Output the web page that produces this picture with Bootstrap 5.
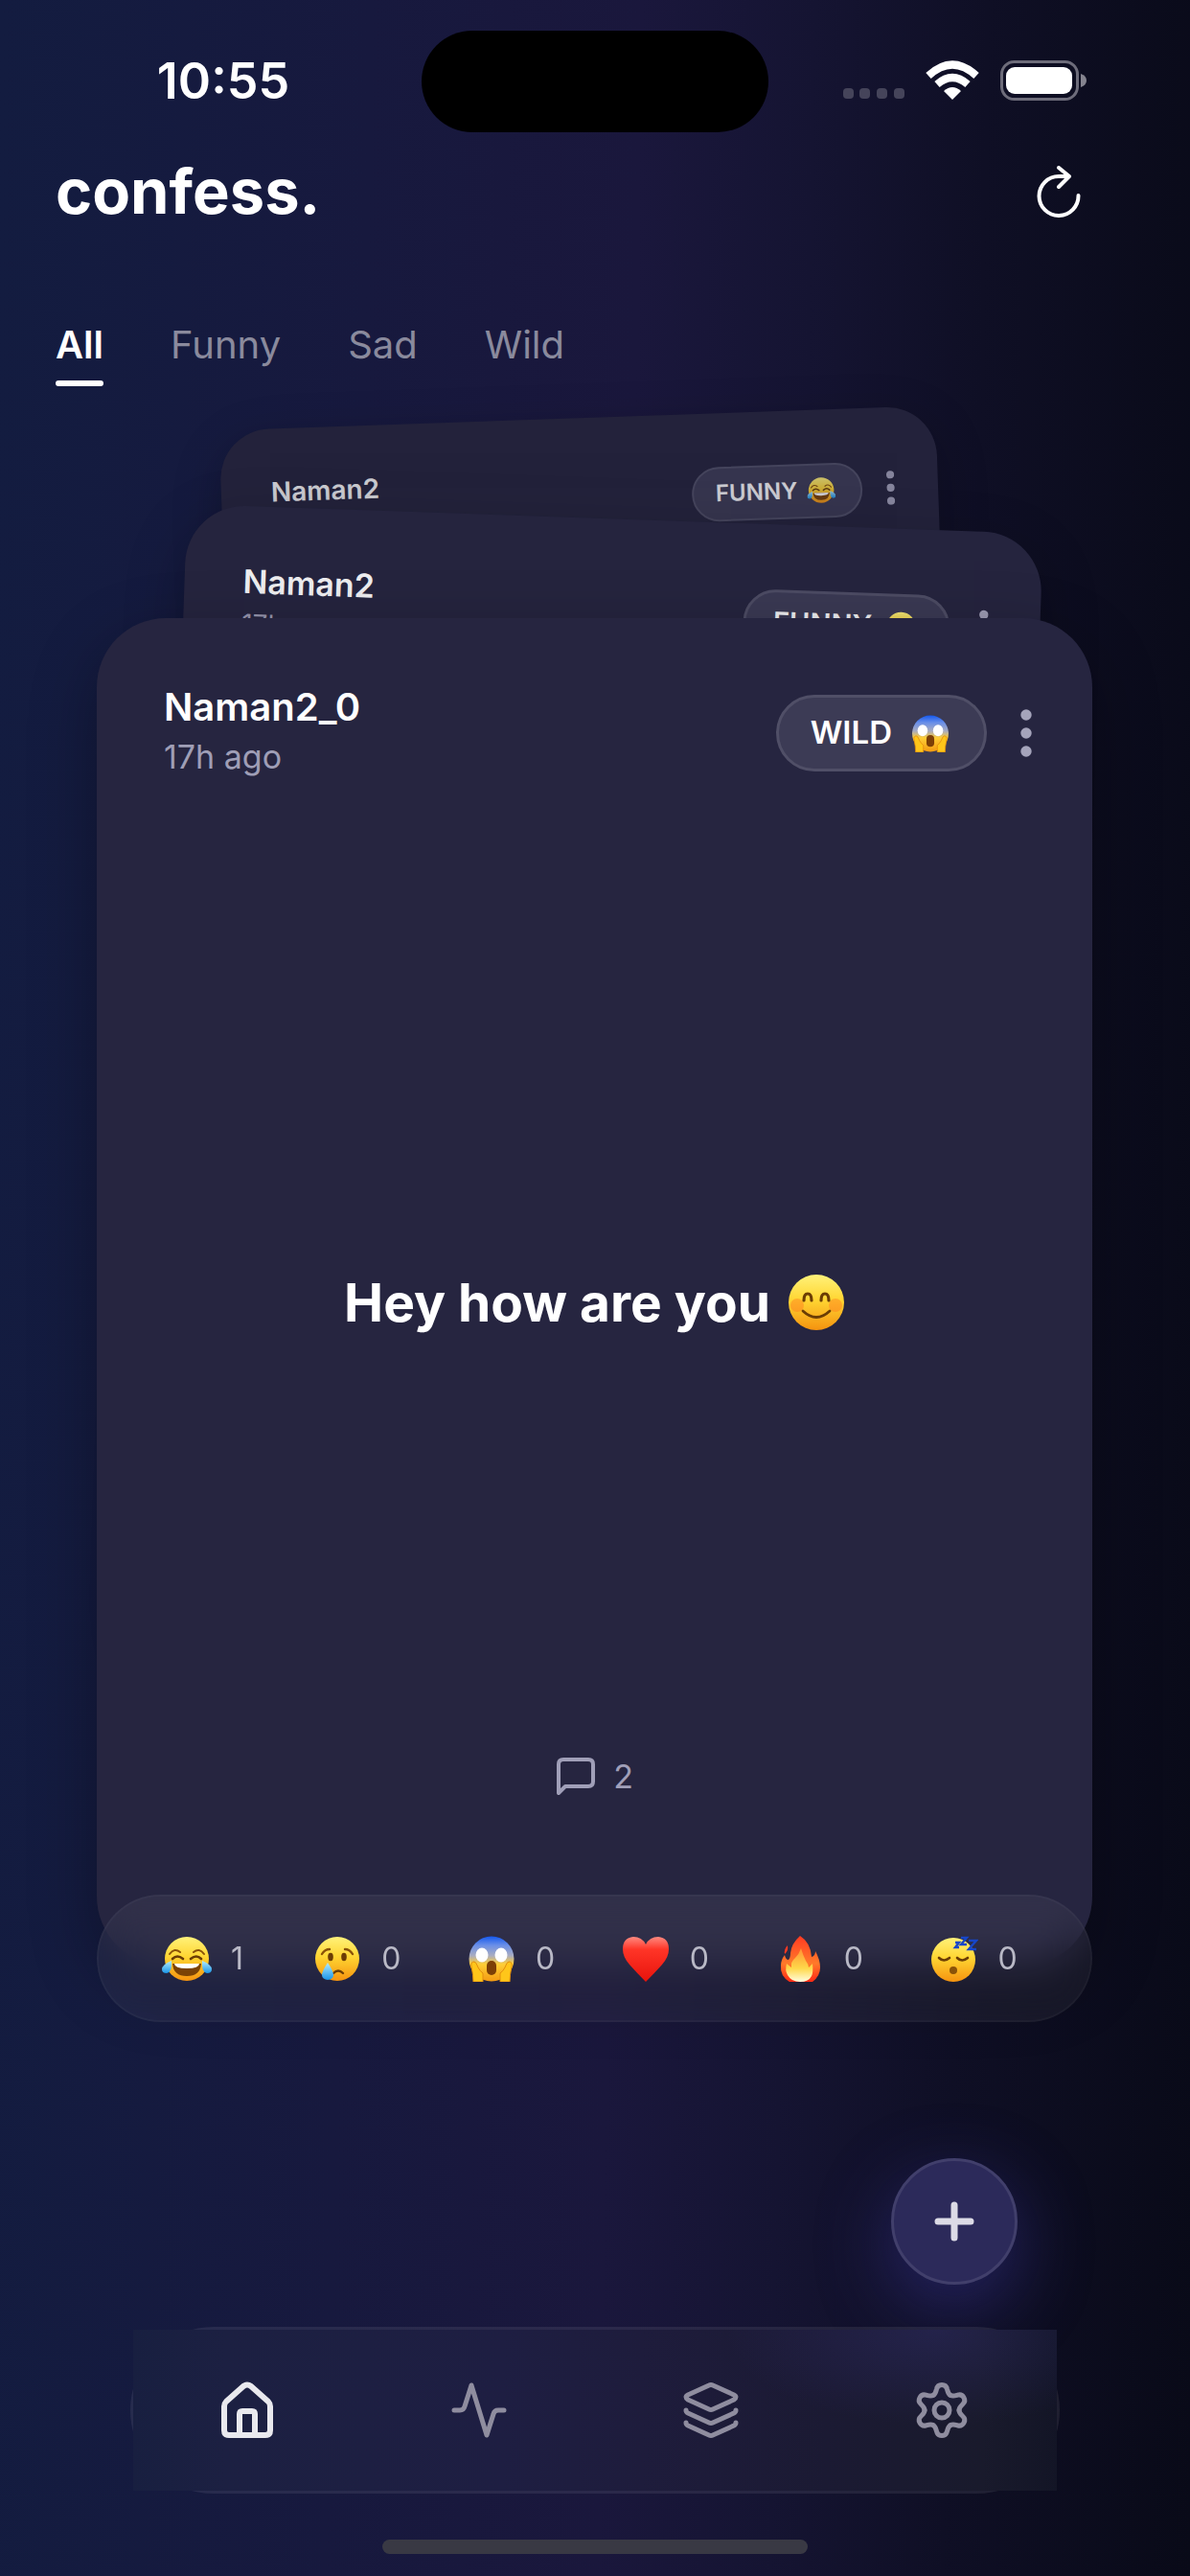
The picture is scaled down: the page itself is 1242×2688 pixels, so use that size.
<!DOCTYPE html>
<html lang="en">

<head>
    <meta charset="UTF-8">
    <meta name="viewport" content="width=device-width, initial-scale=1.0">
    <title>confess.</title>
    <link href="https://cdn.jsdelivr.net/npm/bootstrap@5.3.0/dist/css/bootstrap.min.css" rel="stylesheet">
    <style>
        body {
            font-family: Inter, "Liberation Sans", sans-serif;
            color: #fff;
            background: linear-gradient(91deg, #131c40 0%, #17193e 30%, #1a173c 52%, #151432 66%, #0f0f25 80%, #090a18 100%);
            overflow-x: hidden;
        }

        button, a { color: inherit; }
        button { background: none; border: 0; padding: 0; }
        svg { display: block; flex: none; }

        /* Status bar */
        .status-bar { padding-top: 32px; }
        .status-time { font-size: 52px; line-height: 60px; font-weight: 600; padding-left: 26px; }
        .status-icons { padding-right: 108px; gap: 22px; }
        .island { width: 362px; height: 106px; background: #000; }

        /* Header */
        .app-header { padding: 22px 114px 0 58px; }
        .app-title { font-size: 65px; line-height: 80px; font-weight: 700; }
        .filter-tabs { padding: 96px 58px 0; gap: 70px; }
        .filter-tab { font-size: 40px; line-height: 48px; color: #8a8a9d; }
        .filter-tab.active { color: #fff; font-weight: 600; }
        .filter-tab::after { content: ""; display: block; height: 6px; border-radius: 3px; margin-top: 13px; }
        .filter-tab.active::after { background: #fff; }

        /* Card stack */
        .deck { margin: 33px 102px 0 101px; padding-top: 209px; }
        .confession { background: #262540; border-radius: 72px; color: #fff; padding: 68px 63px 174px; box-shadow: 0 24px 70px rgba(0, 0, 0, .3); }
        .confession-head { padding-left: 7px; }
        .confession-name { font-size: 40px; line-height: 50px; font-weight: 600; }
        .confession-time { font-size: 34px; line-height: 54px; color: #9f9eb6; }
        .confession-tools { gap: 35px; }
        .category {
            height: 80px;
            padding: 0 35px 0 33px;
            gap: 19px;
            font-size: 33px;
            font-weight: 600;
            background: #3c3b55;
            border: 3px solid #504f67;
        }
        .kebab { color: #a5a4bb; }
        .confession-body { padding-top: 70px; gap: 18px; }
        .confession-text { font-size: 55px; line-height: 68px; font-weight: 700; }
        .comments { font-size: 34px; line-height: 46px; color: #a09fb8; gap: 18px; }

        .confession-back { position: absolute; overflow: hidden; }
        .confession-second { top: 105px; bottom: 301px; left: 7%; right: 7%; transform: rotate(2deg); border-radius: 62px; background: #25243e; padding: 58px 54px; box-shadow: 0 20px 60px rgba(0, 0, 0, .25); }
        .confession-third { top: 0; bottom: 603px; left: 14%; right: 14%; transform: rotate(-2deg); border-radius: 52px; background: #23223b; padding: 48px 45px; box-shadow: 0 16px 50px rgba(0, 0, 0, .25); }
        .confession-second .confession-head { opacity: .92; }
        .confession-third .confession-head { opacity: .76; }
        .confession-second .confession-name { font-size: 34px; line-height: 42px; }
        .confession-second .confession-time { font-size: 28px; line-height: 46px; }
        .confession-second .category { font-size: 29px; height: 68px; padding: 0 31px 0 28px; gap: 13px; }
        .confession-second .confession-tools { gap: 30px; }
        .confession-third .confession-name { font-size: 28px; line-height: 36px; }
        .confession-third .confession-time { font-size: 24px; line-height: 36px; }
        .confession-third .category { font-size: 24px; height: 57px; padding: 0 26px 0 23px; gap: 10px; border-width: 2px; }
        .confession-third .confession-tools { gap: 25px; }

        /* Reactions */
        .reactions {
            margin: -74px 102px 0 101px;
            height: 133px;
            padding: 0 42px 0 28px;
            background: rgba(255, 255, 255, .05);
            border: 2px solid rgba(255, 255, 255, .03);
            backdrop-filter: blur(22px);
            z-index: 2;
        }
        .reaction { gap: 20px; font-size: 32px; color: #b9b9c6; }

        /* New confession */
        .fab {
            width: 132px;
            height: 132px;
            margin: 142px 180px 0 0;
            background: #2c2a5a;
            border: 3px solid #413f6b;
            color: #dcdbe6;
            box-shadow: 0 24px 80px rgba(72, 66, 190, .42);
        }

        /* Bottom navigation */
        .bottom-nav { margin: 44px 136px 0; border: 3px solid rgba(255, 255, 255, .08); border-radius: 87px; }
        .bottom-nav-inner {
            height: 168px;
            background:
                radial-gradient(220px 100px at 87% 0, rgba(66, 60, 160, .25), transparent),
                linear-gradient(90deg, #181f40 0%, #1c2042 10%, #1e1e42 40%, #1e1c3c 55%, #1b1a33 75%, #191a2c 92%, #131526 100%);
        }
        .nav-item-link { color: #8f8d9f; }
        .nav-item-link.active { color: #e9e9ee; }
        .home-indicator { width: 444px; height: 15px; margin: 48px 0 23px; background: #393944; }
    </style>
</head>

<body>
    <!-- Emoji and dots shared by the cards -->
    <svg width="0" height="0" class="position-absolute" aria-hidden="true">
        <defs>
            <linearGradient id="face" x1="0" y1="0" x2="0" y2="1">
                <stop offset="0" stop-color="#fff27a" />
                <stop offset=".45" stop-color="#ffd633" />
                <stop offset="1" stop-color="#f5930f" />
            </linearGradient>
            <linearGradient id="scared" x1="0" y1="0" x2="0" y2="1">
                <stop offset="0" stop-color="#1559ee" />
                <stop offset=".2" stop-color="#6a8fe8" />
                <stop offset=".43" stop-color="#a9acc0" />
                <stop offset=".62" stop-color="#ffce35" />
                <stop offset="1" stop-color="#f39a12" />
            </linearGradient>
            <linearGradient id="tear" x1="0" y1="0" x2="0" y2="1">
                <stop offset="0" stop-color="#b4ecff" />
                <stop offset="1" stop-color="#1a96e8" />
            </linearGradient>
            <linearGradient id="love" x1="0" y1="0" x2="0" y2="1">
                <stop offset="0" stop-color="#ff8a80" />
                <stop offset=".28" stop-color="#ff3527" />
                <stop offset="1" stop-color="#e8130c" />
            </linearGradient>
            <linearGradient id="flame" x1="0" y1="0" x2="0" y2="1">
                <stop offset="0" stop-color="#ff3a22" />
                <stop offset=".6" stop-color="#ff7a2a" />
                <stop offset="1" stop-color="#ff2a14" />
            </linearGradient>
            <linearGradient id="flame-core" x1="0" y1="0" x2="0" y2="1">
                <stop offset="0" stop-color="#ff9233" />
                <stop offset=".6" stop-color="#ffd84a" />
                <stop offset="1" stop-color="#fffde0" />
            </linearGradient>

            <symbol id="e-joy" viewBox="0 0 52 48">
                <circle cx="26" cy="24" r="23" fill="url(#face)" />
                <path d="M8 19q5-7 11-2M33 17q6-5 11 2" fill="none" stroke="#8a5208" stroke-width="2" stroke-linecap="round" />
                <path d="M11 24q5-5 11 0M30 24q6-5 11 0" fill="none" stroke="#6b3d05" stroke-width="2.6" stroke-linecap="round" />
                <path d="M11 29h30q-1 13-15 13T11 29z" fill="#7b4205" />
                <path d="M13 29h26q0 5-13 5t-13-5z" fill="#fff" />
                <path d="M10 26q1 12-5 13-5 0-5-4 0-5 10-9zM42 26q-1 12 5 13 5 0 5-4 0-5-10-9z" fill="url(#tear)" />
            </symbol>
            <symbol id="e-cry" viewBox="0 0 52 48">
                <circle cx="26" cy="24" r="23" fill="url(#face)" />
                <path d="M10 19q3-5 8-5M34 14q5 0 8 5" fill="none" stroke="#8a5208" stroke-width="2.4" stroke-linecap="round" />
                <ellipse cx="19" cy="22" rx="2.8" ry="4.2" fill="#6b3d05" />
                <ellipse cx="33" cy="22" rx="2.8" ry="4.2" fill="#6b3d05" />
                <path d="M22 39q5-5 10 0" fill="none" stroke="#6b3d05" stroke-width="2.4" stroke-linecap="round" />
                <path d="M16 28q6 9 6 13a6 5 0 0 1-12 0q0-4 6-13z" fill="url(#tear)" />
            </symbol>
            <symbol id="e-scream" viewBox="0 0 52 48">
                <circle cx="26" cy="24" r="23.500" fill="url(#scared)" />
                <ellipse cx="16" cy="20" rx="6.500" ry="7.500" fill="#fff" />
                <ellipse cx="36" cy="20" rx="6.500" ry="7.500" fill="#fff" />
                <rect x="21" y="26" width="10" height="15" rx="5" fill="#7c3f06" />
                <path d="M5 32q-1-5 3-5 2 0 4 6 2 4 5 6v9H7q0-7-2-16zM47 32q1-5-3-5-2 0-4 6-2 4-5 6v9h10q0-7 2-16z" fill="#ffc61a" stroke="#e28d0c" />
            </symbol>
            <symbol id="e-heart" viewBox="0 0 52 48">
                <path d="M26 48Q17 39 9 30 2 22 2 14 2 2 13 1q9 0 13 8Q30 1 39 1q11 1 11 13 0 8-7 16-8 9-17 18z" fill="url(#love)" />
            </symbol>
            <symbol id="e-fire" viewBox="0 0 52 48">
                <path d="M26 0q11 7 12 22 4-1 4-6 5 9 5 17 0 9-8 15H15Q5 42 6 31q0-6 4-11 1 5 4 5 2-2 2-7 1-10 10-18z" fill="url(#flame)" />
                <path d="M13 10q1 6-3 9-1-5 3-9z" fill="#ff3a22" />
                <path d="M27 13q2 7 5 13 3 4 3 7l4-4q1 9-1 13-3 6-12 6t-13-7q-3-5-1-12l5 4q-1-6 4-10 4-4 6-10z" fill="url(#flame-core)" />
            </symbol>
            <symbol id="e-sleep" viewBox="0 0 52 48">
                <circle cx="26" cy="25" r="23" fill="url(#face)" />
                <path d="M11 23q5 5 11 0M30 23q5 5 11 0" fill="none" stroke="#6b3d05" stroke-width="2.6" stroke-linecap="round" />
                <circle cx="26" cy="36" r="4" fill="#8a5208" />
                <path d="M28 7h4l-4 5h4M34 2h6l-6 7h6M42 5h8l-8 9h8" fill="none" stroke="#1746c8" stroke-width="2.400" />
            </symbol>
            <symbol id="e-smile" viewBox="0 0 60 60">
                <circle cx="30" cy="30" r="29" fill="url(#face)" />
                <circle cx="10" cy="33" r="7" fill="#ff7a1f" opacity=".45" />
                <circle cx="50" cy="33" r="7" fill="#ff7a1f" opacity=".45" />
                <path d="M17 28q0-7 4-7t4 7M35 28q0-7 4-7t4 7" fill="none" stroke="#6b3d05" stroke-width="3.2" stroke-linecap="round" />
                <path d="M16 39q14 13 28 0" fill="none" stroke="#6b3d05" stroke-width="2.800" stroke-linecap="round" />
            </symbol>
            <symbol id="i-kebab" viewBox="0 0 12 50">
                <circle cx="6" cy="6" r="5.700" fill="currentColor" />
                <circle cx="6" cy="25" r="5.700" fill="currentColor" />
                <circle cx="6" cy="44" r="5.700" fill="currentColor" />
            </symbol>
        </defs>
    </svg>

    <div class="d-flex flex-column min-vh-100">

        <!-- Status bar -->
        <div class="status-bar d-flex align-items-center">
            <div class="status-time flex-fill text-center w-25">10:55</div>
            <div class="island rounded-pill flex-shrink-0"></div>
            <div class="status-icons flex-fill w-25 d-flex justify-content-end align-items-center">
                <svg width="64" height="42" viewBox="0 0 64 42" fill="#45445a">
                    <rect x="0" y="28" width="11" height="11" rx="4" />
                    <rect x="17" y="28" width="11" height="11" rx="4" />
                    <rect x="35" y="28" width="11" height="11" rx="4" />
                    <rect x="53" y="28" width="11" height="11" rx="4" />
                </svg>
                <svg width="56" height="44" viewBox="0 0 56 44" fill="none" stroke="#fff">
                    <path d="M3 16Q28-7 53 16" stroke-width="8" />
                    <path d="M12 25q16-14 32 0" stroke-width="8" />
                    <path d="M19 32q9-8 18 0l-9 9z" fill="#fff" stroke="none" />
                </svg>
                <svg width="90" height="44" viewBox="0 0 90 44">
                    <rect x="1.500" y="1.500" width="79" height="39" rx="13" fill="none" stroke="#6d6c7a" stroke-width="3" />
                    <rect x="6" y="7" width="69" height="28" rx="9" fill="#fff" />
                    <path d="M84 14q6 2 6 7t-6 7z" fill="#85848f" />
                </svg>
            </div>
        </div>

        <!-- Header -->
        <header class="app-header d-flex justify-content-between align-items-center">
            <h1 class="app-title m-0">confess.</h1>
            <button type="button" aria-label="Refresh">
                <svg width="46" height="54" viewBox="0 0 46 54" fill="none" stroke="#fff" stroke-width="4" stroke-linecap="round" stroke-linejoin="round">
                    <path d="M33 11H23A20.500 20.500 0 1 0 43.500 31" />
                    <path d="M23 2l11 9-11 11" />
                </svg>
            </button>
        </header>

        <nav class="filter-tabs d-flex" aria-label="Categories">
            <button type="button" class="filter-tab active">All</button>
            <button type="button" class="filter-tab">Funny</button>
            <button type="button" class="filter-tab">Sad</button>
            <button type="button" class="filter-tab">Wild</button>
        </nav>

        <!-- Card stack -->
        <main class="deck position-relative flex-grow-1 d-flex flex-column">
            <article class="confession confession-back confession-third">
                <div class="confession-head d-flex justify-content-between align-items-center">
                    <div>
                        <div class="confession-name">Naman2</div>
                        <div class="confession-time">17h ago</div>
                    </div>
                    <div class="confession-tools d-flex align-items-center">
                        <span class="category rounded-pill d-flex align-items-center">FUNNY
                            <svg width="30" height="28" role="img" aria-label="laughing"><use href="#e-joy" /></svg>
                        </span>
                        <svg class="kebab" width="9" height="36"><use href="#i-kebab" /></svg>
                    </div>
                </div>
            </article>

            <article class="confession confession-back confession-second">
                <div class="confession-head d-flex justify-content-between align-items-center">
                    <div>
                        <div class="confession-name">Naman2</div>
                        <div class="confession-time">17h ago</div>
                    </div>
                    <div class="confession-tools d-flex align-items-center">
                        <span class="category rounded-pill d-flex align-items-center">FUNNY
                            <svg width="34" height="32" role="img" aria-label="laughing"><use href="#e-joy" /></svg>
                        </span>
                        <svg class="kebab" width="10" height="43"><use href="#i-kebab" /></svg>
                    </div>
                </div>
            </article>

            <article class="confession card border-0 flex-grow-1">
                <div class="confession-head d-flex justify-content-between align-items-center">
                    <div>
                        <div class="confession-name">Naman2_0</div>
                        <div class="confession-time">17h ago</div>
                    </div>
                    <div class="confession-tools d-flex align-items-center">
                        <span class="category rounded-pill d-flex align-items-center">WILD
                            <svg width="42" height="39" role="img" aria-label="screaming"><use href="#e-scream" /></svg>
                        </span>
                        <button type="button" class="kebab" aria-label="More options">
                            <svg width="12" height="50"><use href="#i-kebab" /></svg>
                        </button>
                    </div>
                </div>
                <div class="confession-body flex-grow-1 d-flex justify-content-center align-items-center">
                    <p class="confession-text m-0">Hey how are you</p>
                    <svg width="60" height="60" role="img" aria-label="smiling"><use href="#e-smile" /></svg>
                </div>
                <button type="button" class="comments d-flex align-items-center align-self-center">
                    <svg width="42" height="42" viewBox="0 0 42 42" fill="none" stroke="currentColor" stroke-width="4" stroke-linejoin="round">
                        <path d="M3 38V8q0-5 5-5h26q5 0 5 5v18q0 5-5 5H10z" />
                    </svg>
                    2
                </button>
            </article>
        </main>

        <!-- Reactions -->
        <div class="reactions rounded-pill d-flex align-items-center position-relative">
            <button type="button" class="reaction col d-flex justify-content-center align-items-center"><svg width="52" height="48" role="img" aria-label="Funny"><use href="#e-joy" /></svg>1</button>
            <button type="button" class="reaction col d-flex justify-content-center align-items-center"><svg width="52" height="48" role="img" aria-label="Sad"><use href="#e-cry" /></svg>0</button>
            <button type="button" class="reaction col d-flex justify-content-center align-items-center"><svg width="52" height="48" role="img" aria-label="Wild"><use href="#e-scream" /></svg>0</button>
            <button type="button" class="reaction col d-flex justify-content-center align-items-center"><svg width="52" height="48" role="img" aria-label="Love"><use href="#e-heart" /></svg>0</button>
            <button type="button" class="reaction col d-flex justify-content-center align-items-center"><svg width="52" height="48" role="img" aria-label="Fire"><use href="#e-fire" /></svg>0</button>
            <button type="button" class="reaction col d-flex justify-content-center align-items-center"><svg width="52" height="48" role="img" aria-label="Sleepy"><use href="#e-sleep" /></svg>0</button>
        </div>

        <button type="button" class="fab rounded-circle align-self-end d-flex justify-content-center align-items-center" aria-label="New confession">
            <svg width="42" height="42" viewBox="0 0 42 42" stroke="currentColor" stroke-width="7" stroke-linecap="round">
                <path d="M21 4v34M4 21h34" />
            </svg>
        </button>

        <!-- Bottom navigation -->
        <nav class="bottom-nav" aria-label="Main">
            <div class="bottom-nav-inner row g-0 align-items-center">
                <a href="#" class="nav-item-link active col d-flex justify-content-center" aria-label="Home">
                    <svg width="60" height="60" viewBox="0 0 60 60" fill="none" stroke="currentColor" stroke-width="6" stroke-linejoin="round" stroke-linecap="round">
                        <path d="M4 26q0-3 2-5L24 5q4-3 8 0l18 16q2 2 2 5v25q0 5-5 5H9q-5 0-5-5z" />
                        <path d="M20 55V34q0-3 3-3h10q3 0 3 3v21" />
                    </svg>
                </a>
                <a href="#" class="nav-item-link col d-flex justify-content-center" aria-label="Activity">
                    <svg width="60" height="60" viewBox="0 0 60 60" fill="none" stroke="currentColor" stroke-width="5" stroke-linejoin="round" stroke-linecap="round">
                        <path d="M3 30h6q4 0 5-4l7-22 16 52 7-22q1-4 5-4h6" />
                    </svg>
                </a>
                <a href="#" class="nav-item-link col d-flex justify-content-center" aria-label="Collections">
                    <svg width="60" height="60" viewBox="0 0 60 60" fill="none" stroke="currentColor" stroke-width="5" stroke-linejoin="round" stroke-linecap="round">
                        <path d="M28 4q2-1 4 0l22 10q4 2 0 5L32 29q-2 1-4 0L6 19q-4-3 0-5z" />
                        <path d="M4 30q0 2 2 3l22 10q2 1 4 0l22-10q2-1 2-3" />
                        <path d="M4 43q0 2 2 3l22 10q2 1 4 0l22-10q2-1 2-3" />
                    </svg>
                </a>
                <a href="#" class="nav-item-link col d-flex justify-content-center" aria-label="Settings">
                    <svg width="60" height="60" viewBox="-30 -30 60 60" fill="none" stroke="currentColor" stroke-width="5" stroke-linecap="round">
                        <path id="tooth" d="M-9-15.600C-6.400-17.100-6-20-5.500-22Q-4.500-26.500 0-26.500T5.500-22C6-20 6.400-17.100 9-15.600" />
                        <use href="#tooth" transform="rotate(60)" />
                        <use href="#tooth" transform="rotate(120)" />
                        <use href="#tooth" transform="rotate(180)" />
                        <use href="#tooth" transform="rotate(240)" />
                        <use href="#tooth" transform="rotate(300)" />
                        <circle r="8" />
                    </svg>
                </a>
            </div>
        </nav>

        <div class="home-indicator rounded-pill align-self-center"></div>
    </div>

    <script src="https://cdn.jsdelivr.net/npm/bootstrap@5.3.0/dist/js/bootstrap.bundle.min.js"></script>
    <script>
        // Marks the chosen category
        const tabs = document.querySelectorAll('.filter-tab');
        tabs.forEach(tab => {
            tab.addEventListener('click', () => {
                tabs.forEach(t => t.classList.remove('active'));
                tab.classList.add('active');
            });
        });
    </script>
</body>

</html>
